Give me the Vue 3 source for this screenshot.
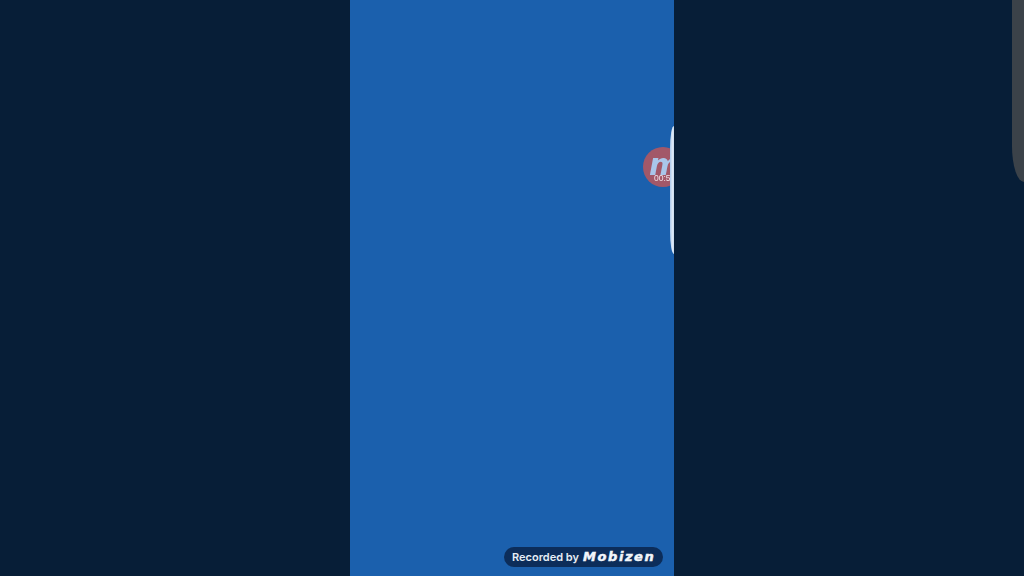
<script setup>
const brand = 'Mobizen'
</script>

<template>
  <div class="screen">
    <div class="side"></div>
    <main class="center">
      <div class="recorder">
        <span class="recorder-logo">m</span>
        <span class="recorder-time">00:56</span>
      </div>
      <div class="edge-handle"></div>
      <div class="watermark">
        <span class="watermark-label">Recorded by</span>
        <span class="watermark-brand">{{ brand }}</span>
      </div>
    </main>
    <div class="side side-right">
      <div class="corner"></div>
    </div>
  </div>
</template>

<style scoped>
.screen {
  display: flex;
  width: 1024px;
  height: 576px;
  overflow: hidden;
  background: #071e37;
}
.side {
  flex: 0 0 350px;
  background: #071e37;
}
.side-right {
  display: flex;
  justify-content: flex-end;
  align-items: flex-start;
}
.corner {
  width: 12px;
  height: 182px;
  background: #3b4249;
  border-bottom-left-radius: 12px 36px;
  filter: blur(0.6px);
}
.center {
  position: relative;
  flex: 0 0 324px;
  overflow: hidden;
  background: #1b60ad;
}
.recorder {
  position: absolute;
  left: 293px;
  top: 147px;
  width: 40px;
  height: 40px;
  border-radius: 50%;
  background: #a25869;
  filter: blur(0.5px);
}
.recorder-logo {
  position: absolute;
  left: 6px;
  top: 9px;
  height: 17px;
  font-family: "DejaVu Sans", sans-serif;
  font-size: 30px;
  font-weight: 700;
  font-style: italic;
  line-height: 17px;
  color: #a9c6ea;
}
.recorder-time {
  position: absolute;
  left: 11px;
  top: 26px;
  font-family: "Liberation Sans", sans-serif;
  font-size: 8.5px;
  line-height: 10px;
  color: #f1e4ea;
}
.edge-handle {
  position: absolute;
  left: 320px;
  top: 126px;
  width: 4px;
  height: 128px;
  background: linear-gradient(90deg, #a9c8ec 0%, #dce8f6 60%, #c8dcf0 100%);
  border-radius: 4px 0 0 4px / 22px 0 0 22px;
  filter: blur(0.4px);
}
.watermark {
  position: absolute;
  left: 154px;
  top: 547px;
  display: flex;
  align-items: center;
  gap: 4px;
  width: 159px;
  height: 20px;
  box-sizing: border-box;
  padding-left: 8px;
  border-radius: 10px;
  background: #0c2d5a;
}
.watermark-label {
  font-family: "Inter", sans-serif;
  font-size: 11px;
  font-weight: 600;
  line-height: 20px;
  white-space: nowrap;
  color: #e6edf5;
}
.watermark-brand {
  font-family: "DejaVu Sans", sans-serif;
  font-size: 13px;
  font-weight: 700;
  font-style: italic;
  line-height: 20px;
  letter-spacing: 1.6px;
  white-space: nowrap;
  color: #f2f6fb;
  -webkit-text-stroke: 0.5px #f2f6fb;
}
</style>
